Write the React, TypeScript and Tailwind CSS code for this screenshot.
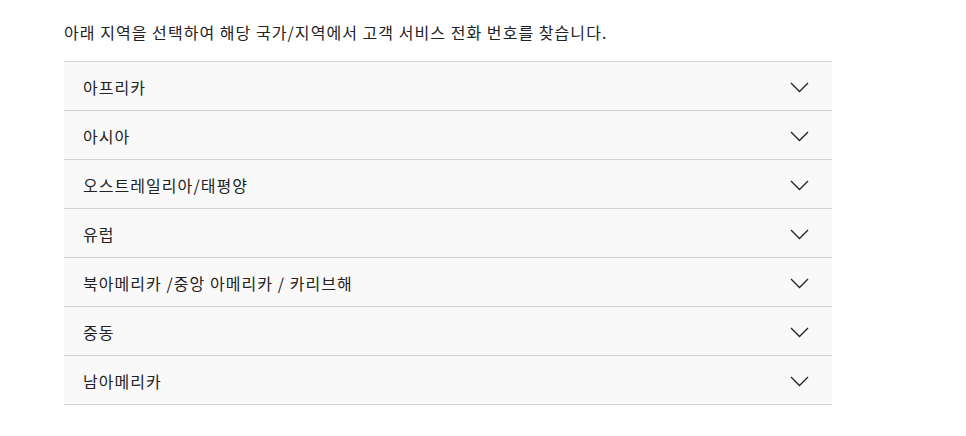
const regions = [
  "아프리카",
  "아시아",
  "오스트레일리아/태평양",
  "유럽",
  "북아메리카 /중앙 아메리카 / 카리브해",
  "중동",
  "남아메리카",
];

const Chevron = () => (
  <svg width="19" height="11" viewBox="0 0 19 11" fill="none" className="mt-[3px]">
    <polyline points="1,1 9.5,9.5 18,1" stroke="#222" strokeWidth="1.3" />
  </svg>
);

export default function App() {
  return (
    <div
      className="min-h-screen bg-white px-16 pt-[20px] text-[#222]"
      style={{ fontFamily: '"Noto Sans CJK KR", "Noto Sans", sans-serif' }}
    >
      <p className="text-[16px] leading-6 tracking-[1.05px] mb-[17px]">
        아래 지역을 선택하여 해당 국가/지역에서 고객 서비스 전화 번호를 찾습니다.
      </p>
      <ul className="w-[768px] border-t border-[#d2d2d2]">
        {regions.map((name) => (
          <li key={name}>
            <button className="flex h-[49px] w-full items-center justify-between border-b border-[#d2d2d2] bg-[#f9f9f9] pl-[19px] pr-[23px] text-left text-[16px] tracking-[1.05px] text-[#222]">
              <span className="pt-[1px]">{name}</span>
              <Chevron />
            </button>
          </li>
        ))}
      </ul>
    </div>
  );
}
